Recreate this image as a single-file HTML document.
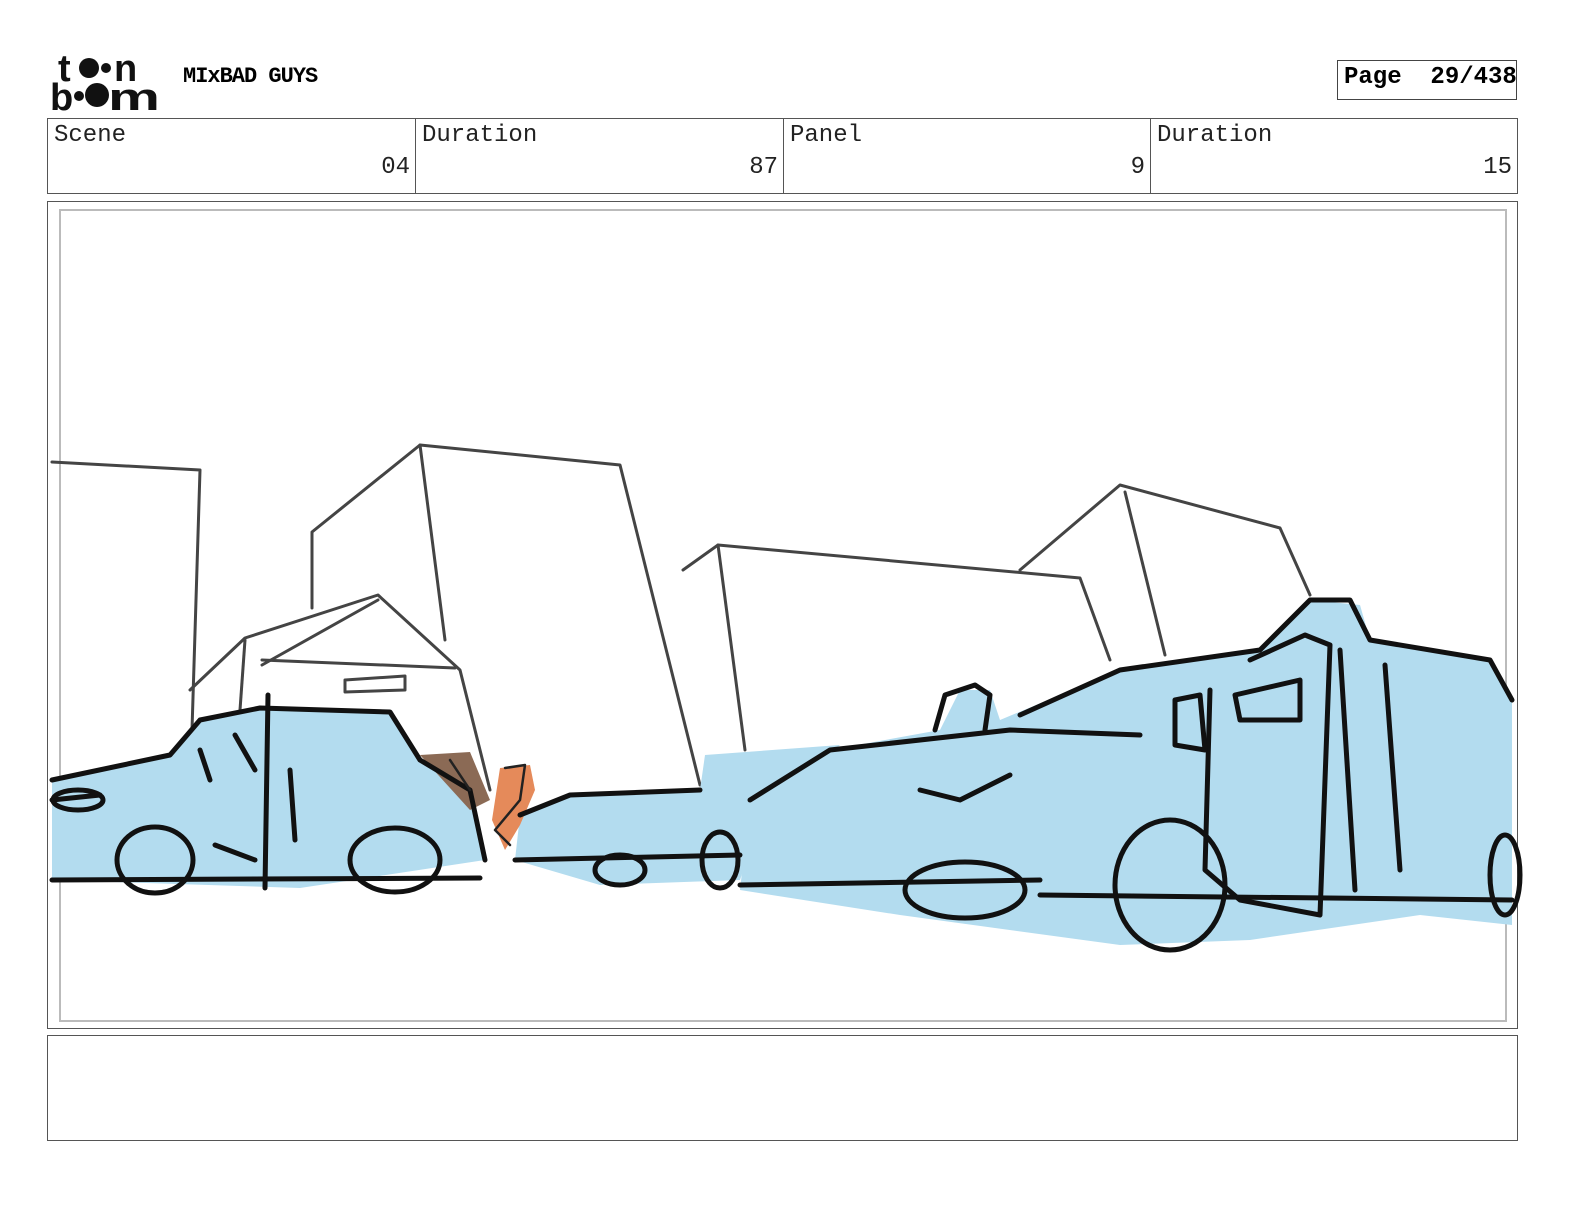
<!DOCTYPE html>
<html><head><meta charset="utf-8"><style>
body{margin:0;width:1584px;height:1224px;background:#fff;position:relative;font-family:"Liberation Mono",monospace;overflow:hidden}
.abs{position:absolute}
.cell{position:absolute;top:118px;height:76px;border:1px solid #555;box-sizing:border-box}
.lab{position:absolute;left:6px;top:3px;font-size:24px;color:#222}
.val{position:absolute;right:5px;top:35px;font-size:24px;color:#222}
</style></head><body>
<svg class="abs" style="left:50px;top:50px" width="115" height="62" viewBox="0 0 115 62">
<text x="8" y="31" font-family="Liberation Sans" font-weight="bold" font-size="38" fill="#111">t</text>
<circle cx="39" cy="18" r="10" fill="#111"/><circle cx="56" cy="18" r="5" fill="#111"/>
<text x="64" y="31" font-family="Liberation Sans" font-weight="bold" font-size="38" fill="#111">n</text>
<text x="0" y="60" font-family="Liberation Sans" font-weight="bold" font-size="38" fill="#111">b</text>
<circle cx="29" cy="46" r="5" fill="#111"/><circle cx="47" cy="45" r="12" fill="#111"/>
<text x="58" y="60" font-family="Liberation Sans" font-weight="bold" font-size="38" fill="#111" textLength="52" lengthAdjust="spacingAndGlyphs">m</text>
</svg>
<div class="abs" style="left:183px;top:64px;font-size:22px;font-weight:bold;letter-spacing:-1px">MIxBAD GUYS</div>
<div class="abs" style="left:1337px;top:60px;width:180px;height:40px;border:1px solid #444;box-sizing:border-box;font-size:24px;font-weight:bold;padding:3px 0 0 6px;white-space:pre">Page  29/438</div>
<div class="cell" style="left:47px;width:369px"><span class="lab">Scene</span><span class="val">04</span></div>
<div class="cell" style="left:415px;width:369px"><span class="lab">Duration</span><span class="val">87</span></div>
<div class="cell" style="left:783px;width:368px"><span class="lab">Panel</span><span class="val">9</span></div>
<div class="cell" style="left:1150px;width:368px"><span class="lab">Duration</span><span class="val">15</span></div>
<div class="abs" style="left:47px;top:201px;width:1471px;height:828px;border:1px solid #555;box-sizing:border-box"></div>
<div class="abs" style="left:59px;top:209px;width:1448px;height:813px;border:2px solid #bbb;box-sizing:border-box"></div>
<div class="abs" style="left:47px;top:1035px;width:1471px;height:106px;border:1px solid #555;box-sizing:border-box"></div>
<svg class="abs" style="left:0;top:0" width="1584" height="1224" fill="none" stroke-linecap="round" stroke-linejoin="round">
<g stroke="#444" stroke-width="3">
<path d="M52 462 L200 470 L192 730"/>
<path d="M312 608 L312 532 L420 445 L620 465 L700 785"/>
<path d="M420 445 L445 640"/>
<path d="M190 690 L245 638 L378 595 L460 670 L490 790"/>
<path d="M262 665 L378 600"/><path d="M245 640 L240 710"/><path d="M262 660 L455 668"/>
<path d="M345 680 L405 676 L405 690 L345 692 Z"/>
<path d="M683 570 L718 545 L1080 578 L1110 660"/><path d="M718 545 L745 750"/>
<path d="M1020 570 L1120 485 L1280 528 L1310 595"/><path d="M1125 492 L1165 655"/>
</g>
<g fill="#b3dcef" stroke="none">
<path d="M52 780 L170 755 L200 720 L260 708 L390 712 L420 760 L470 790 L485 860 L300 888 L52 880 Z"/>
<path d="M520 815 L570 795 L700 790 L705 755 L840 745 L760 820 L740 880 L600 885 L515 860 Z"/>
<path d="M750 800 L830 750 L940 730 L960 690 L990 690 L1000 720 L1120 670 L1260 650 L1310 600 L1360 605 L1370 640 L1490 660 L1512 700 L1512 925 L1420 915 L1250 940 L1120 945 L900 915 L740 890 Z"/>
</g>
<g fill="#8b6a55" stroke="none"><path d="M420 755 L470 752 L490 800 L470 810 Z"/></g>
<g fill="#e58a5a" stroke="none"><path d="M500 768 L530 765 L535 790 L520 825 L505 850 L492 820 Z"/></g>
<g stroke="#111" stroke-width="5">
<path d="M52 780 L170 755 L200 720 L260 708 L390 712 L420 760 L470 790 L485 860"/>
<path d="M52 880 L480 878"/><path d="M268 695 L265 888"/>
<ellipse cx="155" cy="860" rx="38" ry="33"/><ellipse cx="395" cy="860" rx="45" ry="32"/>
<path d="M215 845 L255 860"/><path d="M52 800 L100 795"/><ellipse cx="78" cy="800" rx="25" ry="10"/>
<path d="M200 750 L210 780 M235 735 L255 770"/><path d="M290 770 L295 840"/>
<path d="M520 815 L570 795 L700 790 M515 860 L740 855"/><ellipse cx="720" cy="860" rx="18" ry="28"/><ellipse cx="620" cy="870" rx="25" ry="15"/>
<path d="M750 800 L830 750 L1010 730 L1140 735"/>
<path d="M740 885 L1040 880"/><path d="M1040 895 L1512 900"/>
<path d="M935 730 L945 695 L975 685 L990 695 L985 730"/>
<path d="M1020 715 L1120 670 L1260 650 L1310 600 L1350 600 L1370 640 L1490 660 L1512 700"/>
<path d="M1210 690 L1205 870 L1240 900 L1320 915 L1330 645 L1305 635 L1250 660"/>
<path d="M1235 695 L1300 680 L1300 720 L1240 720 Z"/>
<path d="M1340 650 L1355 890 M1385 665 L1400 870"/>
<ellipse cx="1170" cy="885" rx="55" ry="65"/><ellipse cx="965" cy="890" rx="60" ry="28"/>
<path d="M1175 700 L1200 695 L1205 750 L1175 745 Z"/>
<ellipse cx="1505" cy="875" rx="15" ry="40"/>
<path d="M920 790 L960 800 L1010 775"/>
</g>
<g stroke="#222" stroke-width="2.5"><path d="M450 760 L470 790 M505 768 L525 765 L520 800 L495 830 L510 845"/></g>
</svg>
</body></html>
